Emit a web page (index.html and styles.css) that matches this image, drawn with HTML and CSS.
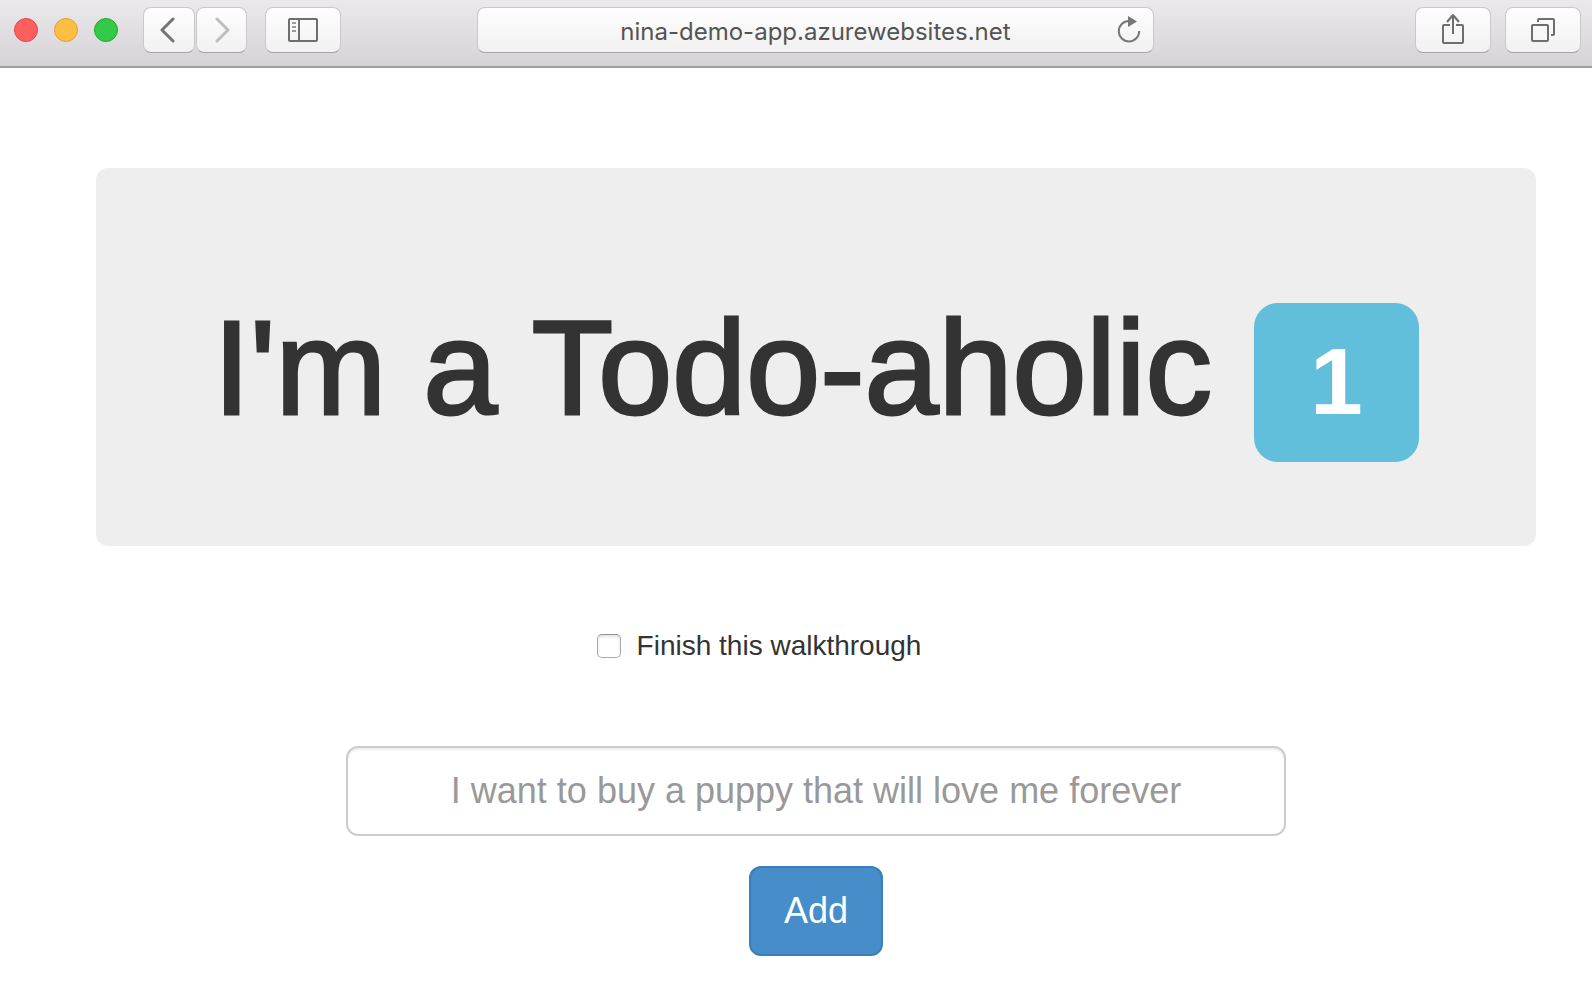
FILE: index.html
```
<!DOCTYPE html>
<html lang="en">
<head>
<meta charset="utf-8">
<meta name="viewport" content="width=device-width, initial-scale=1">
<title>Todo-aholic</title>
<link rel="stylesheet" href="styles.css">
</head>
<body>
<header class="toolbar">
  <div class="window-controls">
    <button class="dot dot-close" aria-label="Close"></button>
    <button class="dot dot-minimize" aria-label="Minimize"></button>
    <button class="dot dot-zoom" aria-label="Zoom"></button>
  </div>
  <div class="history">
    <button class="tool tool-back" aria-label="Back">
      <svg width="16" height="26" viewBox="0 0 16 26"><path d="M14 2 3 13l11 11" stroke="#747474" stroke-width="3"/></svg>
    </button>
    <button class="tool tool-forward" aria-label="Forward">
      <svg width="16" height="26" viewBox="0 0 16 26"><path d="m2 2 11 11L2 24" stroke="#bebebe" stroke-width="3"/></svg>
    </button>
  </div>
  <button class="tool tool-wide" aria-label="Show sidebar">
    <svg width="30" height="24" viewBox="0 0 30 24"><rect x="1" y="1" width="28" height="22" rx="1" stroke="#6e6e6e" stroke-width="2"/><path d="M11 1v22" stroke="#6e6e6e" stroke-width="2"/><path d="M4 5h4M4 9h4M4 13h4" stroke="#9a9a9a" stroke-width="2"/></svg>
  </button>
  <div class="address">
    <input class="address-input" type="text" value="nina-demo-app.azurewebsites.net" aria-label="Address">
    <button class="reload" aria-label="Reload">
      <svg width="24" height="30" viewBox="0 0 24 30"><path d="M12 6A10.200 10.200 0 1 0 22.200 16" stroke="#777" stroke-width="2"/><path d="m11 1 9 5.500-9 5.500Z" fill="#777"/></svg>
    </button>
  </div>
  <div class="actions">
    <button class="tool tool-wide" aria-label="Share">
      <svg width="24" height="34" viewBox="0 0 24 34"><path d="M9 12H3a1 1 0 0 0-1 1v16a1 1 0 0 0 1 1h18a1 1 0 0 0 1-1V13a1 1 0 0 0-1-1h-6M12 21V2M6 9l6-7 6 7" stroke="#6e6e6e" stroke-width="2"/></svg>
    </button>
    <button class="tool tool-wide" aria-label="Show tabs">
      <svg width="24" height="24" viewBox="0 0 24 24"><rect x="1" y="7" width="16" height="16" rx="1" stroke="#6e6e6e" stroke-width="2"/><path d="M7 4V2a1 1 0 0 1 1-1h14a1 1 0 0 1 1 1v14a1 1 0 0 1-1 1h-2" stroke="#6e6e6e" stroke-width="2"/></svg>
    </button>
  </div>
</header>
<main class="container">
  <section class="jumbotron">
    <h1 class="title">I'm a Todo-aholic <span class="count">1</span></h1>
  </section>
  <div class="todo-list">
    <label class="todo"><input class="todo-check" type="checkbox">Finish this walkthrough</label>
  </div>
  <form class="todo-form">
    <input class="todo-input" type="text" placeholder="I want to buy a puppy that will love me forever" aria-label="New todo">
    <button class="add" type="submit">Add</button>
  </form>
</main>
</body>
</html>
```
FILE: styles.css
```
* {
  box-sizing: border-box;
}

body {
  margin: 0;
  background: #fff;
  color: #333;
  font-family: "Liberation Sans", Arial, sans-serif;
  font-size: 28px;
  line-height: 40px;
}

button,
input {
  margin: 0;
  font: inherit;
}

svg {
  display: block;
  fill: none;
  stroke-linejoin: round;
}

.toolbar {
  display: flex;
  align-items: flex-start;
  height: 68px;
  padding: 7px 11px 0 14px;
  border-bottom: 2px solid #a19ea2;
  background: linear-gradient(#ebe9ec, #d5d3d6);
}

.window-controls {
  display: flex;
  gap: 16px;
  padding-top: 11px;
}

.dot {
  width: 24px;
  height: 24px;
  padding: 0;
  border: 1px solid;
  border-radius: 50%;
}

.dot-close {
  border-color: #e2474a;
  background: #fd605c;
}

.dot-minimize {
  border-color: #dfa038;
  background: #fdbe41;
}

.dot-zoom {
  border-color: #25a836;
  background: #34ca49;
}

.history {
  display: flex;
  gap: 1px;
  margin: 0 18px 0 25px;
}

.tool {
  display: flex;
  align-items: center;
  justify-content: center;
  height: 46px;
  padding: 0;
  border: 1px solid #cac8cb;
  border-bottom-color: #a5a3a6;
  border-radius: 8px;
  background: linear-gradient(#fefefe, #f1f1f1);
}

.tool-back {
  width: 52px;
  padding-right: 4px;
}

.tool-forward {
  width: 51px;
  padding-left: 3px;
}

.tool path {
  stroke-linecap: round;
}

.tool-wide {
  width: 76px;
}

.tool-wide path {
  stroke-linecap: butt;
}

.address {
  display: flex;
  align-items: center;
  flex: 0 1 677px;
  height: 46px;
  margin: 0 auto 0 136px;
  padding-right: 12px;
  border: 1px solid #cac8cb;
  border-bottom-color: #a5a3a6;
  border-radius: 8px;
  background: linear-gradient(#fefefe, #f1f1f1);
}

.address-input {
  flex: 1;
  min-width: 0;
  padding: 4px 0 0 36px;
  border: 0;
  outline: 0;
  background: none;
  color: #545454;
  font-family: Inter, Roboto, sans-serif;
  font-size: 24px;
  line-height: 32px;
  text-align: center;
}

.reload {
  padding: 0;
  border: 0;
  background: none;
}

.actions {
  display: flex;
  gap: 14px;
}

.container {
  padding: 100px 56px 30px 96px;
}

.jumbotron {
  padding: 134px 30px 84px;
  border-radius: 12px;
  background: #eee;
  text-align: center;
}

.title {
  display: flex;
  align-items: baseline;
  justify-content: center;
  gap: 42px;
  margin: 0;
  font-size: 133px;
  font-weight: 400;
  line-height: 132px;
  -webkit-text-stroke: 3px #333;
}

.count {
  padding: 31px 56px 33px;
  border-radius: 24px;
  background: #61bfdc;
  color: #fff;
  font-size: 95px;
  font-weight: 700;
  line-height: 95px;
  -webkit-text-stroke: 0;
}

.todo-list {
  display: flex;
  justify-content: center;
  padding: 80px 114px 80px 0;
}

.todo {
  display: flex;
  align-items: center;
  gap: 16px;
}

.todo-check {
  width: 24px;
  height: 24px;
  border: 1px solid #aaa;
  border-top-color: #949494;
  border-radius: 5px;
  background: #fff;
  box-shadow: inset 0 2px 3px #e2e2e2;
  appearance: none;
}

.todo-check:checked {
  background: #428bca;
}

.todo-form {
  display: flex;
  flex-direction: column;
  align-items: center;
  gap: 30px;
  max-width: 940px;
  margin: 0 auto;
  font-size: 36px;
  line-height: 48px;
}

.todo-input {
  width: 100%;
  height: 90px;
  padding: 0 32px;
  border: 2px solid #ccc;
  border-radius: 12px;
  box-shadow: inset 0 2px 2px #eee;
  color: #555;
  text-align: center;
}

.todo-input::placeholder {
  color: #999;
  opacity: 1;
}

.add {
  height: 90px;
  padding: 0 33px;
  border: 2px solid #397fbd;
  border-radius: 12px;
  background: #468dc9;
  color: #fff;
}
```
